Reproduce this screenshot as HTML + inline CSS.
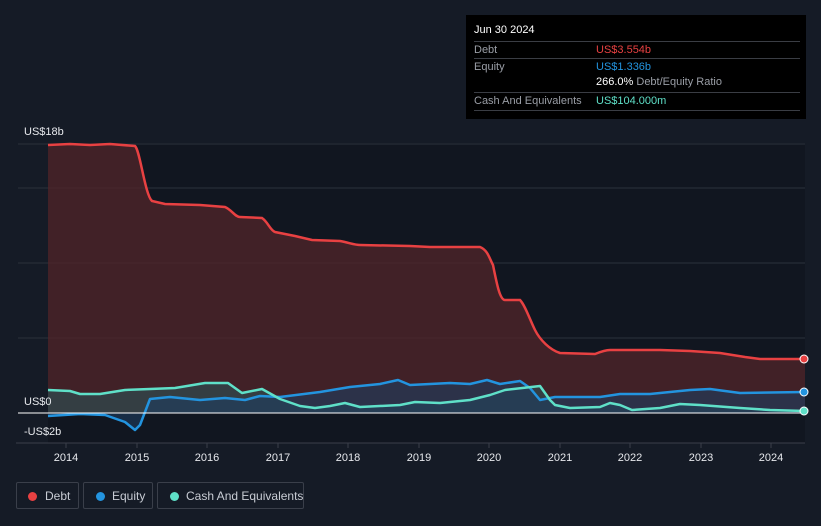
<!DOCTYPE html>
<html><head><meta charset="utf-8"><style>
body{margin:0;width:821px;height:526px;background:#151b26;font-family:"Liberation Sans",sans-serif;overflow:hidden;position:relative}
.tt{position:absolute;left:466px;top:15px;width:340px;height:104px;background:#000;color:#fff;font-size:11px}
.r{position:absolute;left:8px;width:326px;border-top:1px solid #3a3d44;height:17px;line-height:17px}
.lg{position:absolute;top:482px;height:27px;border:1px solid #3a3f4a;border-radius:2px;color:#c8ccd4;font-size:12px;line-height:27px;box-sizing:border-box;white-space:nowrap}
.lg i{position:absolute;top:9px;width:9px;height:9px;border-radius:50%}
</style></head><body>
<svg width="821" height="526" style="position:absolute;left:0;top:0">
<rect x="48" y="143" width="757" height="300" fill="#111620"/>
<g stroke="#2c313b" stroke-width="1">
<line x1="18" y1="144" x2="805" y2="144"/><line x1="18" y1="188" x2="805" y2="188"/><line x1="18" y1="263" x2="805" y2="263"/><line x1="18" y1="338" x2="805" y2="338"/>
</g>
<path d="M48,145 L70,144 L90,145 L110,144 L135,146 C140,150 145,195 152,201 L165,204 L200,205 L225,207 C232,210 235,217 240,217 L262,218 C268,222 270,230 275,232 L295,236 L312,240 L340,241 C350,243 355,245 360,245 L410,246 L430,247 L480,247 C488,250 490,260 493,265 C497,285 500,300 505,300 L520,300 C525,305 530,320 535,330 C540,340 550,350 560,353 L595,354 C600,352 605,350 610,350 L660,350 L690,351 L720,353 L745,357 L760,359 L805,359 L805,413 L48,413Z" fill="#4e2429" opacity="0.8"/>
<path d="M48,390 L70,391 L80,394 L100,394 L125,390 L150,389 L175,388 L205,383 L228,383 L242,393 L262,389 L280,399 L300,406 L315,408 L330,406 L345,403 L360,407 L400,405 L415,402 L440,403 L470,400 L490,395 L505,390 L540,386 L550,400 L555,405 L570,408 L600,407 L610,403 L620,405 L632,410 L660,408 L680,404 L700,405 L740,408 L770,410 L805,411 L805,413 L48,413Z" fill="#2c5256" opacity="0.6"/>
<path d="M48,416 L80,414 L105,415 L125,422 L135,430 L140,425 L150,399 L170,397 L200,400 L225,398 L245,400 L260,396 L280,397 L320,392 L350,387 L380,384 L398,380 L410,385 L450,383 L470,384 L487,380 L500,384 L520,381 L530,388 L540,400 L555,397 L600,397 L620,394 L650,394 L690,390 L710,389 L740,393 L805,392 L805,413 L48,413Z" fill="#1e3e60" opacity="0.6"/>
<path d="M48,145 L70,144 L90,145 L110,144 L135,146 C140,150 145,195 152,201 L165,204 L200,205 L225,207 C232,210 235,217 240,217 L262,218 C268,222 270,230 275,232 L295,236 L312,240 L340,241 C350,243 355,245 360,245 L410,246 L430,247 L480,247 C488,250 490,260 493,265 C497,285 500,300 505,300 L520,300 C525,305 530,320 535,330 C540,340 550,350 560,353 L595,354 C600,352 605,350 610,350 L660,350 L690,351 L720,353 L745,357 L760,359 L805,359" fill="none" stroke="#e84142" stroke-width="2.5"/>
<path d="M48,416 L80,414 L105,415 L125,422 L135,430 L140,425 L150,399 L170,397 L200,400 L225,398 L245,400 L260,396 L280,397 L320,392 L350,387 L380,384 L398,380 L410,385 L450,383 L470,384 L487,380 L500,384 L520,381 L530,388 L540,400 L555,397 L600,397 L620,394 L650,394 L690,390 L710,389 L740,393 L805,392" fill="none" stroke="#2394df" stroke-width="2.5" stroke-linejoin="round"/>
<path d="M48,390 L70,391 L80,394 L100,394 L125,390 L150,389 L175,388 L205,383 L228,383 L242,393 L262,389 L280,399 L300,406 L315,408 L330,406 L345,403 L360,407 L400,405 L415,402 L440,403 L470,400 L490,395 L505,390 L540,386 L550,400 L555,405 L570,408 L600,407 L610,403 L620,405 L632,410 L660,408 L680,404 L700,405 L740,408 L770,410 L805,411" fill="none" stroke="#5fe0c8" stroke-width="2.5" stroke-linejoin="round"/>
<line x1="18" y1="413" x2="805" y2="413" stroke="#fff" stroke-width="1"/>
<line x1="16" y1="443" x2="805" y2="443" stroke="#3a3f4a"/>
<g stroke="#3a3f4a"><line x1="66" y1="443" x2="66" y2="448"/><line x1="137" y1="443" x2="137" y2="448"/><line x1="207" y1="443" x2="207" y2="448"/><line x1="278" y1="443" x2="278" y2="448"/><line x1="348" y1="443" x2="348" y2="448"/><line x1="419" y1="443" x2="419" y2="448"/><line x1="489" y1="443" x2="489" y2="448"/><line x1="560" y1="443" x2="560" y2="448"/><line x1="630" y1="443" x2="630" y2="448"/><line x1="701" y1="443" x2="701" y2="448"/><line x1="771" y1="443" x2="771" y2="448"/></g>
<circle cx="804" cy="359" r="4" fill="#e84142" stroke="#fff" stroke-width="1"/>
<circle cx="804" cy="392" r="4" fill="#2394df" stroke="#fff" stroke-width="1"/>
<circle cx="804" cy="411" r="4" fill="#5fe0c8" stroke="#fff" stroke-width="1"/>
<g fill="#e6e8ec" font-size="11" font-family="Liberation Sans">
<text x="24" y="135">US$18b</text><text x="24" y="405">US$0</text><text x="24" y="435">-US$2b</text>
</g>
<g fill="#e6e8ec" font-size="11" font-family="Liberation Sans" text-anchor="middle">
<text x="66" y="461">2014</text><text x="137" y="461">2015</text><text x="207" y="461">2016</text><text x="278" y="461">2017</text><text x="348" y="461">2018</text><text x="419" y="461">2019</text><text x="489" y="461">2020</text><text x="560" y="461">2021</text><text x="630" y="461">2022</text><text x="701" y="461">2023</text><text x="771" y="461">2024</text>
</g>
</svg>
<div class="tt">
<div style="position:absolute;left:8px;top:9px">Jun 30 2024</div>
<div class="r" style="top:26px;color:#9a9ea6">Debt<span style="position:absolute;left:122px;color:#e84142">US$3.554b</span></div>
<div class="r" style="top:43px;color:#9a9ea6">Equity<span style="position:absolute;left:122px;color:#2394df">US$1.336b</span></div>
<div style="position:absolute;left:130px;top:61px;color:#9a9ea6"><b style="color:#fff;font-weight:normal">266.0%</b> Debt/Equity Ratio</div>
<div class="r" style="top:77px;color:#9a9ea6">Cash And Equivalents<span style="position:absolute;left:122px;color:#5fe0c8">US$104.000m</span></div>
<div class="r" style="top:95px;height:0"></div>
</div>
<div class="lg" style="left:16px;width:63px"><i style="left:11px;background:#e84142"></i><span style="position:absolute;left:28px">Debt</span></div>
<div class="lg" style="left:83px;width:70px"><i style="left:12px;background:#2394df"></i><span style="position:absolute;left:28px">Equity</span></div>
<div class="lg" style="left:157px;width:147px"><i style="left:12px;background:#5fe0c8"></i><span style="position:absolute;left:28px">Cash And Equivalents</span></div>
</body></html>
